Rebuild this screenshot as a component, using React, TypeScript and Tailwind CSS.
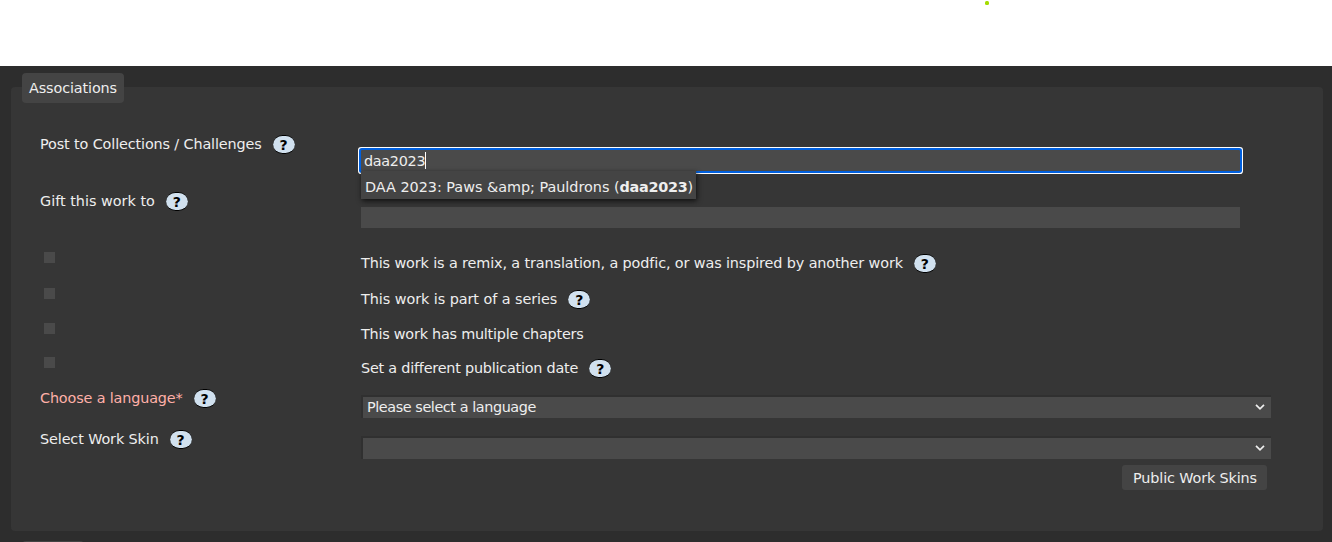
import type { ReactNode } from "react";

function Help() {
  return (
    <button className="relative ml-[11px] flex h-[19px] w-[22px] shrink-0 items-center justify-center rounded-[10px] border-y border-black bg-[#d1e1ef] pt-px text-[14px] leading-none font-bold tracking-normal text-black">
      ?
    </button>
  );
}

function Label({ children, help = true, className = "" }: { children: ReactNode; help?: boolean; className?: string }) {
  return (
    <div className={"flex h-[26px] items-center whitespace-nowrap " + className}>
      <span>{children}</span>
      {help && <Help />}
    </div>
  );
}

function Check() {
  return (
    <div className="pt-[2px] pl-1">
      <div className="size-[11px] bg-[#4a4a4a]" />
    </div>
  );
}

function Select({ children }: { children?: ReactNode }) {
  return (
    <div className="mt-[10px] flex h-[23px] w-[910px] items-center justify-between border-t-2 border-l-2 border-[#303030] bg-[#4a4a4a] pr-[6px] pb-px pl-1">
      <span className="tracking-[-0.42px]">{children}</span>
      <svg width="10" height="6" viewBox="0 0 10 6" fill="none" stroke="#eee" strokeWidth="1.7">
        <path d="M1 .8 5 4.8 9 .8" />
      </svg>
    </div>
  );
}

const row = "grid grid-cols-[321px_1fr] items-start";

export default function App() {
  return (
    <div className="h-[542px] w-[1332px] overflow-hidden bg-[#2d2d2d] font-['DejaVu_Sans',sans-serif] text-[14.4px] leading-[20px] text-[#eee]">
      <header className="h-[66px] bg-white pt-[1px] pl-[985px]">
        <div className="size-[4px] rounded-[1.5px] bg-[#a4dc00]" />
      </header>
      <main className="px-[11px] pt-[21px]">
        <section className="h-[444px] w-[1312px] rounded-[4px] bg-[#363636] pl-[11px]">
          <h2 className="relative -top-[14px] flex h-[30px] w-[102px] items-center justify-center rounded-[4px] bg-[#444] tracking-[-0.12px]">Associations</h2>
          <div className="pt-[14px] pl-[18px]">
            <div className={row + " h-[57px]"}>
              <Label className="tracking-[-0.13px]">Post to Collections / Challenges</Label>
              <div className="relative mt-[19px] flex h-[21px] w-[879px] items-center rounded-[1px] bg-[#4a4a4a] pl-[3px] shadow-[0_0_0_2px_#0060df,0_0_0_3px_#fff]">
                <span className="tracking-[-0.3px]">daa2023</span>
                <span className="h-[17px] w-px bg-white" />
                <div className="absolute top-[21px] left-0 z-10 flex h-[28px] w-[335px] items-center bg-[#444] pt-[3px] pl-1 whitespace-nowrap shadow-[1px_2px_5px_#111]">
                  <span className="tracking-[-0.02px]">DAA 2023: Paws &amp;amp; Pauldrons (<b className="tracking-[-0.25px]">daa2023</b>)</span>
                </div>
              </div>
            </div>
            <div className={row + " h-[62px]"}>
              <Label>Gift this work to</Label>
              <div className="mt-[19px] h-[21px] w-[879px] bg-[#4a4a4a]" />
            </div>
            <div className={row + " h-[36px]"}>
              <Check />
              <Label className="tracking-[-0.12px]">This work is a remix, a translation, a podfic, or was inspired by another work</Label>
            </div>
            <div className={row + " h-[35px]"}>
              <Check />
              <Label className="tracking-[-0.06px]">This work is part of a series</Label>
            </div>
            <div className={row + " h-[34px]"}>
              <Check />
              <Label help={false} className="tracking-[-0.23px]">This work has multiple chapters</Label>
            </div>
            <div className={row + " h-[30px]"}>
              <Check />
              <Label className="tracking-[-0.22px]">Set a different publication date</Label>
            </div>
            <div className={row + " h-[41px]"}>
              <Label className="tracking-[-0.15px] text-[#ffb0a8]">Choose a language*</Label>
              <Select>Please select a language</Select>
            </div>
            <div className={row + " h-[39px]"}>
              <Label className="tracking-[-0.12px]">Select Work Skin</Label>
              <Select />
            </div>
            <div className="flex pl-[1082px]">
              <button className="h-[25px] w-[145px] rounded-[3px] bg-[#444] pl-px tracking-[-0.14px] whitespace-nowrap">Public Work Skins</button>
            </div>
          </div>
        </section>
        <div className="mt-[10px] ml-[11px] h-[30px] w-[62px] rounded-[4px] bg-[#444]" />
      </main>
    </div>
  );
}
